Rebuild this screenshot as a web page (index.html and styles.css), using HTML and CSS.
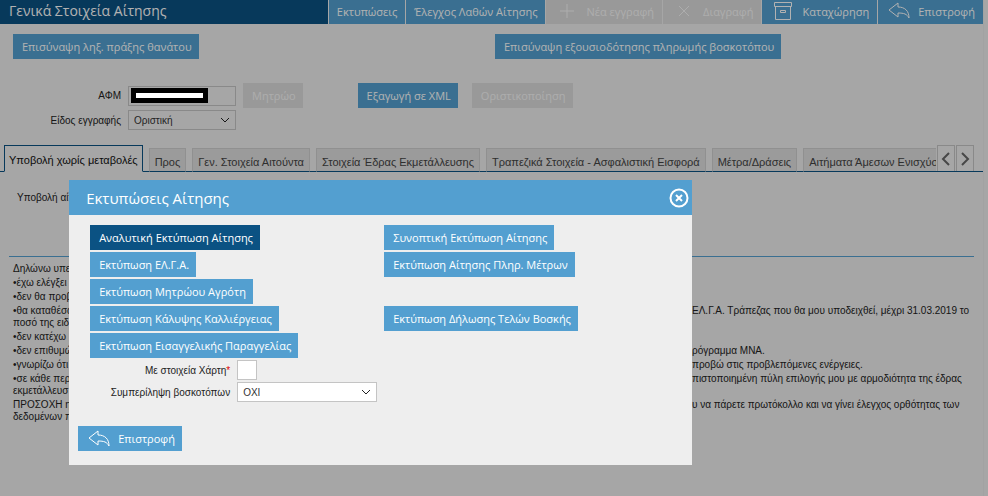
FILE: index.html
```html
<!DOCTYPE html>
<html lang="el">
<head>
    <meta charset="utf-8">
    <title>Γενικά Στοιχεία Αίτησης</title>
    <link rel="stylesheet" href="styles.css">
</head>
<body>
    <div class="page">
        <header class="toolbar">
            <h1 class="toolbar-title">Γενικά Στοιχεία Αίτησης</h1>
            <button class="tool">Εκτυπώσεις</button>
            <button class="tool">Έλεγχος Λαθών Αίτησης</button>
            <button class="tool tool-icon" disabled>
                <svg width="22" height="18" viewBox="0 0 22 18"><path d="M11 2v14M4 9h14"/></svg>
                Νέα εγγραφή
            </button>
            <button class="tool tool-icon" disabled>
                <svg width="22" height="18" viewBox="0 0 22 18"><path d="M6 4l10 10M16 4L6 14"/></svg>
                Διαγραφή
            </button>
            <button class="tool tool-icon">
                <svg width="22" height="18" viewBox="0 0 22 18"><path d="M2.500.5h17v4h-17zM3.500 4.500h15v13h-15zM8.500 8.500h5v2h-5z"/></svg>
                Καταχώρηση
            </button>
            <button class="tool tool-icon">
                <svg width="22" height="18" viewBox="0 0 22 18"><path d="M1 8L10 1V5C17 5 21 9 21 16C19 12 16 11 10 11V15Z"/></svg>
                Επιστροφή
            </button>
        </header>

        <div class="attachments">
            <button class="btn">Επισύναψη ληξ. πράξης θανάτου</button>
            <button class="btn">Επισύναψη εξουσιοδότησης πληρωμής βοσκοτόπου</button>
        </div>

        <div class="form">
            <label class="form-label" for="afm">ΑΦΜ</label>
            <div class="field">
                <input class="control" type="text" id="afm">
                <span class="mask"></span>
            </div>
            <div class="form-actions">
                <button class="btn" disabled>Μητρώο</button>
                <button class="btn btn-export">Εξαγωγή σε XML</button>
                <button class="btn btn-final" disabled>Οριστικοποίηση</button>
            </div>
            <label class="form-label" for="kind">Είδος εγγραφής</label>
            <div class="field">
                <select class="control" id="kind"><option>Οριστική</option></select>
                <svg class="chevron" width="10" height="6" viewBox="0 0 10 6"><path d="M1 1l4 4 4-4"/></svg>
            </div>
        </div>

        <nav class="tabs">
            <div class="tab-list">
                <button class="tab active">Υποβολή χωρίς μεταβολές</button>
                <button class="tab">Προς</button>
                <button class="tab">Γεν. Στοιχεία Αιτούντα</button>
                <button class="tab">Στοιχεία Έδρας Εκμετάλλευσης</button>
                <button class="tab">Τραπεζικά Στοιχεία - Ασφαλιστική Εισφορά</button>
                <button class="tab">Μέτρα/Δράσεις</button>
                <button class="tab">Αιτήματα Άμεσων Ενισχύσεων</button>
            </div>
            <button class="tab-scroll" aria-label="Προηγούμενο"><svg width="10" height="14" viewBox="0 0 10 14"><path d="M8 1L2 7l6 6"/></svg></button>
            <button class="tab-scroll" aria-label="Επόμενο"><svg width="10" height="14" viewBox="0 0 10 14"><path d="M2 1l6 6-6 6"/></svg></button>
        </nav>

        <main class="panel">
            <p class="panel-label">Υποβολή αίτ</p>
            <div class="declaration">
                <p><span>Δηλώνω υπε</span></p>
                <p><span>•έχω ελέγξει</span></p>
                <p><span>•δεν θα προβ</span></p>
                <p><span>•θα καταθέσω<br>ποσό της ειδ</span><span>ΕΛ.Γ.Α. Τράπεζας που θα μου υποδειχθεί, μέχρι 31.03.2019 το</span></p>
                <p><span>•δεν κατέχω</span></p>
                <p><span>•δεν επιθυμώ</span><span>ρόγραμμα ΜΝΑ.</span></p>
                <p><span>•γνωρίζω ότι</span><span>προβώ στις προβλεπόμενες ενέργειες.</span></p>
                <p><span>•σε κάθε περ<br>εκμετάλλευσ</span><span>πιστοποιημένη πύλη επιλογής μου με αρμοδιότητα της έδρας</span></p>
                <p><span>ΠΡΟΣΟΧΗ η<br>δεδομένων π</span><span>υ να πάρετε πρωτόκολλο και να γίνει έλεγχος ορθότητας των</span></p>
            </div>
        </main>
    </div>

    <div class="overlay"></div>

    <section class="dialog" role="dialog" aria-labelledby="dialog-title">
        <header class="dialog-header">
            <h2 id="dialog-title">Εκτυπώσεις Αίτησης</h2>
            <button class="dialog-close" aria-label="Κλείσιμο">
                <svg width="20" height="20" viewBox="0 0 20 20"><circle cx="10" cy="10" r="8.500"/><path d="M7 7l6 6M13 7l-6 6"/></svg>
            </button>
        </header>
        <div class="dialog-body">
            <div class="prints">
                <button class="btn btn-current">Αναλυτική Εκτύπωση Αίτησης</button>
                <button class="btn">Συνοπτική Εκτύπωση Αίτησης</button>
                <button class="btn">Εκτύπωση ΕΛ.Γ.Α.</button>
                <button class="btn">Εκτύπωση Αίτησης Πληρ. Μέτρων</button>
                <button class="btn btn-alone">Εκτύπωση Μητρώου Αγρότη</button>
                <button class="btn">Εκτύπωση Κάλυψης Καλλιέργειας</button>
                <button class="btn">Εκτύπωση Δήλωσης Τελών Βοσκής</button>
                <button class="btn btn-alone">Εκτύπωση Εισαγγελικής Παραγγελίας</button>
            </div>
            <div class="options">
                <label class="form-label" for="map">Με στοιχεία Χάρτη<span class="required">*</span></label>
                <input class="check" type="checkbox" id="map">
                <label class="form-label" for="pasture">Συμπερίληψη βοσκοτόπων</label>
                <div class="field">
                    <select class="control" id="pasture"><option>ΟΧΙ</option></select>
                    <svg class="chevron" width="10" height="6" viewBox="0 0 10 6"><path d="M1 1l4 4 4-4"/></svg>
                </div>
            </div>
            <button class="btn btn-back">
                <svg width="22" height="18" viewBox="0 0 22 18"><path d="M1 8L10 1V5C17 5 21 9 21 16C19 12 16 11 10 11V15Z"/></svg>
                Επιστροφή
            </button>
        </div>
    </section>
</body>
</html>
```
FILE: styles.css
```css
* {
    box-sizing: border-box;
}
body {
    margin: 0;
    background: #eee;
    color: #222;
    font-family: "Liberation Sans", Arial, sans-serif;
    font-size: 10px;
    overflow: hidden;
}
h1, h2, p {
    margin: 0;
    font-weight: normal;
}
button, input, select {
    margin: 0;
    font-family: inherit;
    font-size: inherit;
}
svg {
    flex: none;
    fill: none;
    stroke: currentColor;
}
.page {
    min-height: 100vh;
    margin-right: 4px;
    border-right: 1px solid #e8e8e8;
}

/* toolbar */
.toolbar {
    display: flex;
    height: 24px;
    background: #0b5283;
    color: #fff;
}
.toolbar-title {
    flex: 1;
    padding-left: 9px;
    font-family: "Open Sans", sans-serif;
    font-size: 14px;
    line-height: 22px;
    white-space: nowrap;
}
.tool {
    display: flex;
    align-items: center;
    padding: 0 8px 2px;
    border: 0;
    border-left: 1px solid #eee;
    background: #539fd0;
    color: #fff;
    font-family: "Open Sans", sans-serif;
    font-size: 11px;
    white-space: nowrap;
}
.tool-icon {
    gap: 8px;
    padding-left: 10px;
}
.tool:disabled, .btn:disabled {
    background: #dcdcdc;
    color: #f8f8f8;
}

/* buttons */
.btn {
    display: flex;
    align-items: center;
    justify-content: center;
    height: 25px;
    padding: 0 7px 0 9px;
    border: 0;
    background: #539fd0;
    color: #fff;
    font-family: "Open Sans", sans-serif;
    font-size: 11px;
    white-space: nowrap;
}
.btn-current {
    background: #0b5283;
}
.attachments {
    display: grid;
    grid-template-columns: 1fr 1fr;
    justify-items: start;
    padding: 10px 6px 0 13px;
}

/* form */
.form {
    display: grid;
    grid-template-columns: 121px 108px 1fr;
    gap: 2px 7px;
    align-items: center;
    margin-top: 24px;
}
.form-label {
    text-align: right;
    white-space: nowrap;
}
.form-actions {
    display: flex;
}
.btn-export {
    margin-left: 55px;
}
.btn-final {
    margin-left: 14px;
}
.field {
    position: relative;
    display: flex;
}
.control {
    width: 100%;
    height: 20px;
    padding: 0 5px;
    border: 1px solid #c4c4c4;
    border-radius: 0;
    background: #fff;
    color: #333;
    appearance: none;
}
.form .control {
    background: #eee;
}
.chevron {
    position: absolute;
    top: 7px;
    right: 6px;
    pointer-events: none;
}
.mask {
    position: absolute;
    top: 2px;
    left: 3px;
    width: 77px;
    height: 15px;
    border: 5px solid #000;
    background: #fff;
    z-index: 1;
}

/* tabs */
.tabs {
    display: flex;
    align-items: flex-end;
    height: 27px;
    margin-top: 15px;
    padding: 0 9px 0 4px;
    border-bottom: 1px solid #0b5283;
}
.tab-list {
    display: flex;
    flex: 1;
    align-items: flex-end;
    gap: 6px;
    min-width: 0;
    margin-bottom: -1px;
    overflow: hidden;
}
.tab {
    flex: none;
    height: 24px;
    padding: 4px 5px 0;
    border: 1px solid #cfcfcf;
    border-bottom-color: #0b5283;
    background: #dedede;
    color: #444;
    font-size: 11px;
    white-space: nowrap;
}
.tab.active {
    height: 27px;
    padding: 2px 4px 0;
    border-color: #0b5283;
    border-bottom-color: #eee;
    background: #eee;
    color: #111;
}
.tab-scroll {
    display: flex;
    align-items: center;
    justify-content: center;
    width: 18px;
    height: 26px;
    margin-left: 1px;
    padding: 0;
    border: 1px solid #c4c4c4;
    border-bottom: 0;
    background: #eee;
    color: #666;
}
.tab-scroll svg {
    stroke-width: 2;
}

/* panel */
.panel {
    padding: 20px 9px 0;
}
.panel-label {
    height: 64px;
    padding-left: 8px;
}
.declaration {
    padding: 6px 4px;
    border-top: 1px solid #539fd0;
    line-height: 12px;
}
.declaration p {
    display: grid;
    grid-template-columns: 679px 1fr;
    margin-bottom: 2px;
    white-space: nowrap;
}

/* dialog */
.overlay {
    position: fixed;
    inset: 0;
    background: rgba(0, 0, 0, 0.3);
}
.dialog {
    position: absolute;
    top: 180px;
    left: 7%;
    width: 63%;
    background: #eee;
    z-index: 2;
}
.dialog-header {
    display: flex;
    align-items: center;
    justify-content: space-between;
    height: 35px;
    padding: 0 3px 0 17px;
    background: #539fd0;
    color: #fff;
}
.dialog-header h2 {
    font-family: "Open Sans", sans-serif;
    font-size: 15px;
}
.dialog-close {
    display: flex;
    padding: 0;
    border: 0;
    background: none;
    color: #fff;
}
.dialog-close svg {
    stroke-width: 2;
}
.dialog-body {
    padding: 10px 9px 14px;
}
.prints {
    display: grid;
    grid-template-columns: 294px 1fr;
    gap: 2px 0;
    justify-items: start;
    padding-left: 12px;
}
.btn-alone {
    grid-column: 1 / -1;
}
.options {
    display: grid;
    grid-template-columns: 152px 140px;
    gap: 2px 7px;
    align-items: center;
    margin: 2px 0 24px;
}
.required {
    color: #d00;
}
.check {
    width: 20px;
    height: 20px;
    border: 1px solid #c4c4c4;
    background: #fff;
    appearance: none;
}
.btn-back {
    gap: 8px;
    padding-left: 10px;
}
```
